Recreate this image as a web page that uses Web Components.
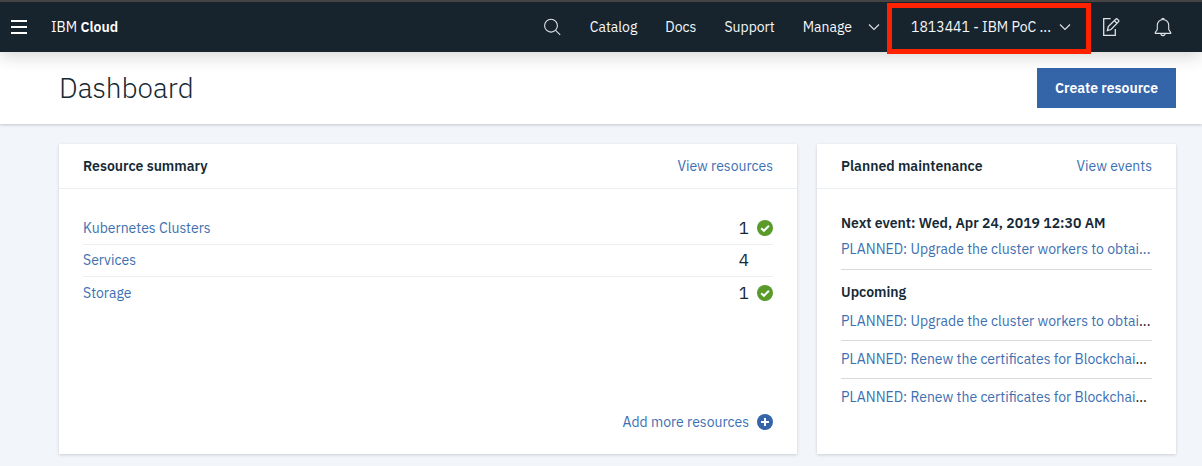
<!DOCTYPE html>
<html lang="en">
<head>
<meta charset="utf-8">
<title>Dashboard - IBM Cloud</title>
<style>
  html { --ink: #152935; --link: #3d70b2; --bar: #17242e; --blue: #3565a9; }
  body { margin: 0; min-height: 100vh; background: #f2f5fa; color: var(--ink);
    font: 14px/20px "IBM Plex Sans", Roboto, "Liberation Sans", sans-serif; }
</style>
</head>
<body>
<cloud-app></cloud-app>

<script>
const base = `
  *, *::before { box-sizing: border-box; }
  a { color: var(--link); text-decoration: none; }
  a:hover { text-decoration: underline; }
  button { font: inherit; cursor: pointer; margin: 0; }
  h1, h2, h3, ul { margin: 0; padding: 0; }
  svg { display: block; flex: none; }
`;
function define(name, css, html) {
  customElements.define(name, class extends HTMLElement {
    constructor() {
      super();
      this.attachShadow({ mode: "open" }).innerHTML = `<style>${base}${css}</style>${html}`;
    }
  });
}

const chevron = `<svg width="12" height="8" viewBox="0 0 12 8" fill="none" stroke="#dfe3e6" stroke-width="1.1" aria-hidden="true"><path d="M1 1.5l5 5 5-5"/></svg>`;

define("cloud-header", `
  :host { display: block; position: relative; z-index: 1; background: var(--bar); color: #fff;
    border-top: 2px solid #464544; box-shadow: 0 4px 16px rgba(0,0,0,.17); }
  header { display: flex; align-items: center; height: 50px; padding: 0 23px 0 7px; }
  a { color: #f5f7fa; }
  button { background: none; border: 0; padding: 0; color: inherit; display: flex; align-items: center; justify-content: center; }
  .menu { width: 24px; height: 32px; }
  .brand { margin-left: 20px; color: #fff; }
  .brand b { font-weight: 600; }
  nav { margin-left: auto; display: flex; align-items: center; gap: 28px; }
  .manage { gap: 16px; color: #f5f7fa; }
  .account { position: relative; width: 204px; height: 50px; margin-left: 7px; gap: 8px; color: #f5f7fa; padding-left: 4px; }
  .account::before { content: ""; position: absolute; inset: 1px 0 -2px; border: 5px solid #ff2200; }
  .icon { width: 32px; height: 32px; }
  .tools { display: flex; gap: 20px; margin-left: 4px; }
`, `
  <header>
    <button class="menu" aria-label="Menu"><svg width="16" height="14" fill="#fff"><path d="M0 0h16v2H0zM0 6h16v2H0zM0 12h16v2H0z"/></svg></button>
    <a class="brand" href="#">IBM <b>Cloud</b></a>
    <nav>
      <button aria-label="Search"><svg width="18" height="18" viewBox="0 0 18 18" fill="none" stroke="#dfe3e6" stroke-width="1.1"><circle cx="7" cy="7.7" r="6.4"/><path d="M11.6 12.3l4.6 4.5"/></svg></button>
      <a href="#">Catalog</a>
      <a href="#">Docs</a>
      <a href="#">Support</a>
      <button class="manage">Manage ${chevron}</button>
    </nav>
    <button class="account"><span>1813441 - IBM PoC ...</span>${chevron}</button>
    <div class="tools">
      <button class="icon" aria-label="Edit"><svg width="18" height="20" viewBox="0 0 18 20" fill="none" stroke="#dfe3e6" stroke-width="1.3"><path d="M8.6 1.7H1.7v16.6h11.6v-6.3"/><path d="M5.4 13.6l.9-4 7.7-7.6q.6-.5 1.2 0l1.4 1.4q.6.6 0 1.2l-7.6 7.9z"/><path d="M12.4 3.6l2.6 2.6"/></svg></button>
      <button class="icon" aria-label="Notifications"><svg width="18" height="20" viewBox="0 0 18 20" fill="none" stroke="#dfe3e6" stroke-width="1.1"><path d="M7.8 2.5a1.2 1.2 0 0 1 2.4 0"/><path d="M3.3 12.5V8.2a5.7 5.7 0 0 1 11.4 0v4.3l2 3v.9H1.3v-.9z"/><path d="M6.8 16.6a2.2 2 0 0 0 4.4 0"/></svg></button>
    </div>
  </header>`);

define("page-title", `
  :host { display: flex; align-items: center; justify-content: space-between; background: #fff;
    padding: 16px 26px 16px 59px; box-shadow: 0 1px 3px rgba(0,0,0,.2); }
  h1 { font-size: 28px; line-height: 40px; font-weight: 300; }
`, `<h1><slot></slot></h1><slot name="action"></slot>`);

define("primary-button", `
  :host { display: block; }
  button { height: 40px; padding: 0 18px; border: 0; background: var(--blue); color: #fff; font-weight: 600; }
`, `<button><slot></slot></button>`);

define("dash-card", `
  :host { display: flex; flex-direction: column; min-width: 0; min-height: 310px; background: #fff; box-shadow: 0 1px 3px rgba(0,0,0,.16); }
  .head { display: flex; align-items: center; justify-content: space-between; height: 45px; padding: 0 24px; border-bottom: 1px solid #ecefef; }
  h2 { font-size: 14px; line-height: 20px; font-weight: 600; }
  .body { flex: 1; display: flex; flex-direction: column; padding: 24px 24px 20px; }
`, `<div class="head"><h2><slot name="title"></slot></h2><slot name="link"></slot></div><div class="body"><slot></slot></div>`);

const check = `<svg width="16" height="16" viewBox="0 0 16 16" role="img" aria-label="OK"><circle cx="8" cy="8" r="8" fill="#5a9a2a"/><path d="M4.2 8.2l2.7 2.6 5-5" fill="none" stroke="#fff" stroke-width="2"/></svg>`;
define("resource-table", `
  :host { display: block; }
  table { width: 100%; border-collapse: separate; border-spacing: 0; }
  th, td { height: 32px; padding: 0 0 1px; border-bottom: 1px solid #ecefef; text-align: left; font-weight: 400; }
  tr:last-child > * { border-bottom: 0; padding-bottom: 0; }
  .count { text-align: right; font-size: 17px; }
  .status { width: 24px; padding-left: 8px; }
`, `<table>
    <tr><th scope="row"><a href="#">Kubernetes Clusters</a></th><td class="count">1</td><td class="status">${check}</td></tr>
    <tr><th scope="row"><a href="#">Services</a></th><td class="count">4</td><td class="status"></td></tr>
    <tr><th scope="row"><a href="#">Storage</a></th><td class="count">1</td><td class="status">${check}</td></tr>
  </table>`);

define("add-link", `
  :host { display: flex; justify-content: flex-end; margin-top: auto; }
  a { display: flex; align-items: center; gap: 8px; line-height: 24px; }
`, `<a href="#"><slot></slot><svg width="16" height="16" viewBox="0 0 16 16"><circle cx="8" cy="8" r="8" fill="#3565a9"/><path d="M8 4v8M4 8h8" stroke="#fff" stroke-width="2"/></svg></a>`);

define("event-list", `
  :host { display: block; white-space: nowrap; }
  h3 { font-size: 14px; line-height: 20px; font-weight: 600; }
  .next { padding-bottom: 10px; border-bottom: 1px solid #d5dadc; }
  .next a { display: block; margin-top: 6px; }
  .later { margin: 12px 0 1px; }
  li { list-style: none; height: 38px; line-height: 37px; border-bottom: 1px solid #d5dadc; }
  li:last-child { border-bottom: 0; }
`, `<div class="next"><h3>Next event: Wed, Apr 24, 2019 12:30 AM</h3><a href="#">PLANNED: Upgrade the cluster workers to obtai...</a></div>
  <h3 class="later">Upcoming</h3>
  <ul>
    <li><a href="#">PLANNED: Upgrade the cluster workers to obtai</a>...</li>
    <li><a href="#">PLANNED: Renew the certificates for Blockchai</a>...</li>
    <li><a href="#">PLANNED: Renew the certificates for Blockchai</a>...</li>
  </ul>`);

define("cloud-app", `
  :host { display: block; }
  main { display: grid; grid-template-columns: minmax(0, 738fr) minmax(0, 359fr); gap: 20px; padding: 20px 26px 12px 59px; }
`, `<cloud-header></cloud-header>
  <page-title>Dashboard<primary-button slot="action">Create resource</primary-button></page-title>
  <main>
    <dash-card><span slot="title">Resource summary</span><a slot="link" href="#">View resources</a>
      <resource-table></resource-table><add-link>Add more resources</add-link></dash-card>
    <dash-card><span slot="title">Planned maintenance</span><a slot="link" href="#">View events</a>
      <event-list></event-list></dash-card>
  </main>`);
</script>
</body>
</html>
